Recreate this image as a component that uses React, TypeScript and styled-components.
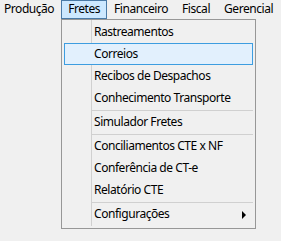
import React from "react";
import styled, { createGlobalStyle } from "styled-components";

const Global = createGlobalStyle`
  html, body { margin: 0; padding: 0; background: #f0f0f0; }
  body { font-family: "Noto Sans", "Segoe UI", sans-serif; font-size: 12px; color: #000; letter-spacing: -0.45px; }
`;

const Screen = styled.div`
  position: relative;
  width: 281px;
  height: 241px;
  background: #f0f0f0;
  overflow: hidden;
`;

const MenuBar = styled.div`
  display: flex;
  height: 19px;
  align-items: stretch;
`;

const BarItem = styled.div<{ $active?: boolean; $first?: boolean }>`
  display: flex;
  align-items: center;
  box-sizing: border-box;
  padding: 0 6px 1px ${(p) => (p.$first ? "3px" : "6px")};
  border: 1px solid ${(p) => (p.$active ? "#4a7aa6" : "transparent")};
  background: ${(p) => (p.$active ? "#cce8ff" : "transparent")};
  white-space: nowrap;
  line-height: 16px;
`;

const Dropdown = styled.div`
  position: absolute;
  left: 61px;
  top: 19px;
  width: 195px;
  box-sizing: border-box;
  border: 1px solid #979797;
  background: #f0f0f0;
  padding: 1px 2px 3px 2px;
  display: flex;
  flex-direction: column;
`;

const Gutter = styled.div`
  position: absolute;
  left: 29px;
  top: 0;
  bottom: 2px;
  width: 1px;
  background: #d0d0d0;
`;

const Item = styled.div<{ $hot?: boolean }>`
  position: relative;
  height: 22px;
  box-sizing: border-box;
  display: flex;
  align-items: center;
  padding-left: 29px;
  padding-bottom: 1px;
  border: 1px solid ${(p) => (p.$hot ? "#3d9de0" : "transparent")};
  background: ${(p) => (p.$hot ? "#e2f0fd" : "transparent")};
  white-space: nowrap;
  line-height: 16px;
  z-index: 1;
`;

const Separator = styled.div`
  height: 2px;
  display: flex;
  align-items: flex-end;
  padding-left: 28px;
  &::after {
    content: "";
    flex: 1;
    height: 1px;
    background: #d0d0d0;
  }
`;

const Arrow = styled.span`
  position: absolute;
  right: 6px;
  top: 7px;
  width: 0;
  height: 0;
  border-top: 4px solid transparent;
  border-bottom: 4px solid transparent;
  border-left: 4px solid #000;
`;

type Entry = { label?: string; sep?: boolean; hot?: boolean; sub?: boolean };

const entries: Entry[] = [
  { label: "Rastreamentos" },
  { label: "Correios", hot: true },
  { label: "Recibos de Despachos" },
  { label: "Conhecimento Transporte" },
  { sep: true },
  { label: "Simulador Fretes" },
  { sep: true },
  { label: "Conciliamentos CTE x NF" },
  { label: "Conferência de CT-e" },
  { label: "Relatório CTE" },
  { sep: true },
  { label: "Configurações", sub: true },
];

const barItems = ["Produção", "Fretes", "Financeiro", "Fiscal", "Gerencial"];

export default function App() {
  return (
    <Screen>
      <Global />
      <MenuBar>
        {barItems.map((b, i) => (
          <BarItem key={b} $first={i === 0} $active={b === "Fretes"}>
            {b}
          </BarItem>
        ))}
      </MenuBar>
      <Dropdown>
        <Gutter />
        {entries.map((e, i) =>
          e.sep ? (
            <Separator key={i} />
          ) : (
            <Item key={i} $hot={e.hot}>
              {e.label}
              {e.sub && <Arrow />}
            </Item>
          )
        )}
      </Dropdown>
    </Screen>
  );
}
